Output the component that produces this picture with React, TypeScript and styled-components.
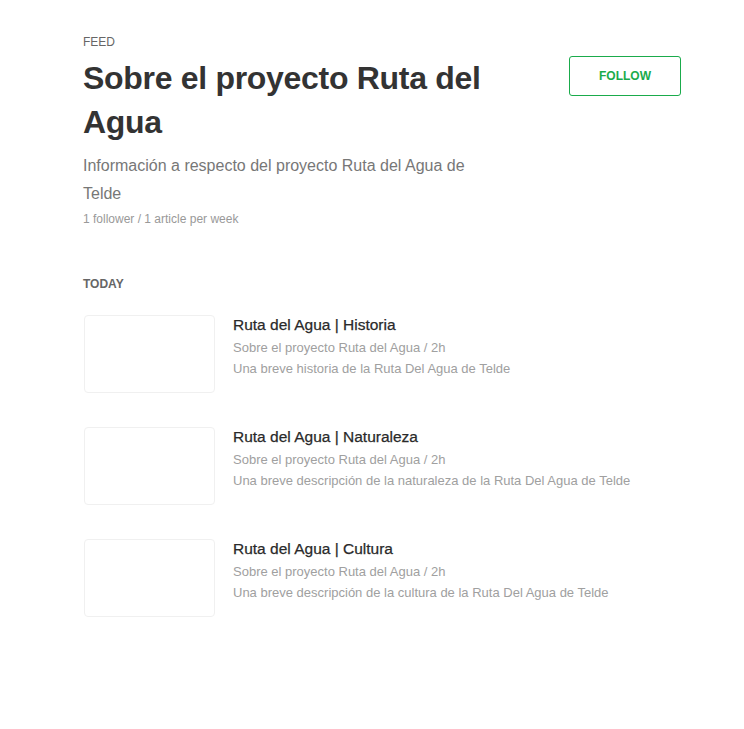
import React from "react";
import styled, { createGlobalStyle } from "styled-components";

const Global = createGlobalStyle`
  html, body { margin: 0; padding: 0; background: #fff; }
  body { font-family: "Liberation Sans", Arial, sans-serif; -webkit-font-smoothing: antialiased; }
`;

const Page = styled.div`
  width: 598px;
  padding: 34px 0 0 83px;
  box-sizing: content-box;
`;

const Header = styled.header`
  display: flex;
  justify-content: space-between;
  align-items: flex-start;
`;

const HeaderText = styled.div`
  display: flex;
  flex-direction: column;
  max-width: 420px;
`;

const Eyebrow = styled.div`
  font-size: 12px;
  line-height: 16px;
  color: #666;
  text-transform: uppercase;
`;

const Title = styled.h1`
  margin: 6px 0 0;
  font-size: 32px;
  line-height: 44px;
  font-weight: 700;
  color: #333;
  letter-spacing: -0.3px;
`;

const Subtitle = styled.p`
  margin: 8px 0 0;
  width: 410px;
  font-size: 16px;
  line-height: 28px;
  color: #777;
`;

const Stats = styled.div`
  margin-top: 3px;
  font-size: 12px;
  line-height: 16px;
  color: #999;
`;

const FollowButton = styled.button`
  margin-top: 22px;
  width: 112px;
  height: 40px;
  padding-top: 1px;
  border: 1px solid #1aab4b;
  border-radius: 3px;
  background: #fff;
  color: #1aab4b;
  font-family: "Liberation Sans", Arial, sans-serif;
  font-size: 12px;
  font-weight: 700;
  text-transform: uppercase;
  cursor: pointer;
`;

const Section = styled.section`
  margin-top: 49px;
  display: flex;
  flex-direction: column;
`;

const SectionLabel = styled.div`
  font-size: 12px;
  line-height: 16px;
  font-weight: 700;
  color: #666;
  text-transform: uppercase;
  margin-bottom: 23px;
`;

const List = styled.div`
  display: flex;
  flex-direction: column;
  gap: 34px;
`;

const Item = styled.article`
  display: flex;
  gap: 18px;
  align-items: flex-start;
`;

const Thumb = styled.div`
  width: 129px;
  height: 76px;
  margin-left: 1px;
  border: 1px solid #f0f0f0;
  border-radius: 4px;
  flex-shrink: 0;
`;

const ItemText = styled.div`
  display: flex;
  flex-direction: column;
`;

const ItemTitle = styled.h2`
  margin: 0;
  font-size: 15.5px;
  line-height: 20px;
  font-weight: 400;
  color: #2a2a2a;
  -webkit-text-stroke: 0.25px #2a2a2a;
`;

const ItemLine = styled.p`
  margin: 2px 0 0;
  font-size: 13px;
  line-height: 21px;
  color: #a0a0a0;
  & + & { margin-top: 0; }
`;

const items = [
  { title: "Ruta del Agua | Historia", desc: "Una breve historia de la Ruta Del Agua de Telde" },
  { title: "Ruta del Agua | Naturaleza", desc: "Una breve descripción de la naturaleza de la Ruta Del Agua de Telde" },
  { title: "Ruta del Agua | Cultura", desc: "Una breve descripción de la cultura de la Ruta Del Agua de Telde" },
];

export default function App() {
  return (
    <>
      <Global />
      <Page>
        <Header>
          <HeaderText>
            <Eyebrow>Feed</Eyebrow>
            <Title>Sobre el proyecto Ruta del Agua</Title>
            <Subtitle>Información a respecto del proyecto Ruta del Agua de Telde</Subtitle>
            <Stats>1 follower / 1 article per week</Stats>
          </HeaderText>
          <FollowButton>Follow</FollowButton>
        </Header>
        <Section>
          <SectionLabel>Today</SectionLabel>
          <List>
            {items.map((it) => (
              <Item key={it.title}>
                <Thumb />
                <ItemText>
                  <ItemTitle>{it.title}</ItemTitle>
                  <ItemLine>Sobre el proyecto Ruta del Agua / 2h</ItemLine>
                  <ItemLine>{it.desc}</ItemLine>
                </ItemText>
              </Item>
            ))}
          </List>
        </Section>
      </Page>
    </>
  );
}
